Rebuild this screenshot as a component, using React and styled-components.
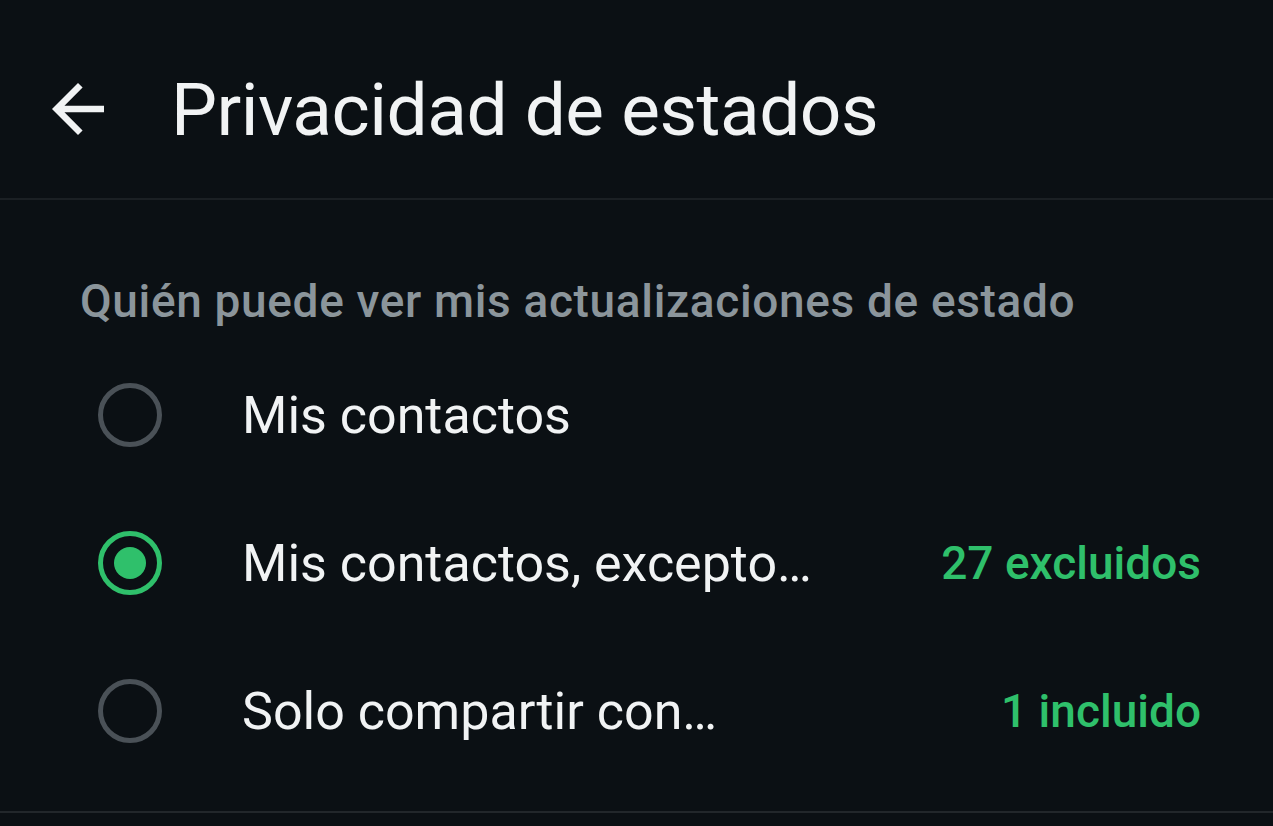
import React from 'react';
import styled, { createGlobalStyle } from 'styled-components';

const GlobalStyle = createGlobalStyle`
  html, body {
    margin: 0;
    padding: 0;
    background: #0b1014;
  }
  body {
    font-family: Roboto, "Noto Sans", sans-serif;
    -webkit-font-smoothing: antialiased;
  }
`;

const Screen = styled.div`
  width: 1273px;
  height: 826px;
  background: #0b1014;
  color: #f1f3f4;
  overflow: hidden;
`;

const Header = styled.header`
  height: 200px;
  display: flex;
  align-items: center;
  padding: 22px 0 0 39px;
  border-bottom: 2px solid #1b2024;
  box-sizing: border-box;
`;

const BackButton = styled.button`
  width: 78px;
  height: 78px;
  padding: 0;
  border: 0;
  background: none;
  color: #f1f3f4;
  display: flex;
  margin-top: -3px;
`;

const Title = styled.h1`
  margin: 0 0 0 54px;
  font-size: 73px;
  font-weight: 400;
  letter-spacing: -0.5px;
`;

const Section = styled.section`
  padding-top: 74px;
  padding-bottom: 26px;
  border-bottom: 2px solid #22272b;
`;

const SectionLabel = styled.div`
  padding-left: 80px;
  font-size: 46px;
  line-height: 54px;
  font-weight: 500;
  letter-spacing: 0.65px;
  color: #8b959b;
  margin-bottom: 13px;
`;

const Row = styled.label`
  height: 148px;
  display: flex;
  align-items: center;
  padding: 0 72px 0 98px;
`;

const Radio = styled.span`
  width: 64px;
  height: 64px;
  flex: none;
  box-sizing: border-box;
  border-radius: 50%;
  border: 5px solid ${p => (p.$checked ? '#2fc06b' : '#4a5157')};
  display: flex;
  align-items: center;
  justify-content: center;

  &::after {
    content: '';
    width: 32px;
    height: 32px;
    border-radius: 50%;
    background: #2fc06b;
    display: ${p => (p.$checked ? 'block' : 'none')};
  }
`;

const OptionText = styled.span`
  margin-left: 80px;
  flex: 1;
  font-size: 52px;
  color: #f1f3f4;
`;

const Count = styled.span`
  font-size: 46px;
  font-weight: 500;
  color: #2fc06b;
`;

const options = [
  { label: 'Mis contactos' },
  { label: 'Mis contactos, excepto…', count: '27 excluidos', checked: true },
  { label: 'Solo compartir con…', count: '1 incluido' },
];

const ArrowBack = () => (
  <svg viewBox="0 0 24 24" width="78" height="78" fill="currentColor">
    <path d="M20 11H7.83l5.59-5.59L12 4l-8 8 8 8 1.41-1.41L7.83 13H20v-2z" />
  </svg>
);

const App = () => (
  <Screen>
    <GlobalStyle />
    <Header>
      <BackButton aria-label="Atrás">
        <ArrowBack />
      </BackButton>
      <Title>Privacidad de estados</Title>
    </Header>
    <Section>
      <SectionLabel>Quién puede ver mis actualizaciones de estado</SectionLabel>
      {options.map(o => (
        <Row key={o.label}>
          <Radio $checked={o.checked} />
          <OptionText>{o.label}</OptionText>
          {o.count && <Count>{o.count}</Count>}
        </Row>
      ))}
    </Section>
  </Screen>
);

export default App;
